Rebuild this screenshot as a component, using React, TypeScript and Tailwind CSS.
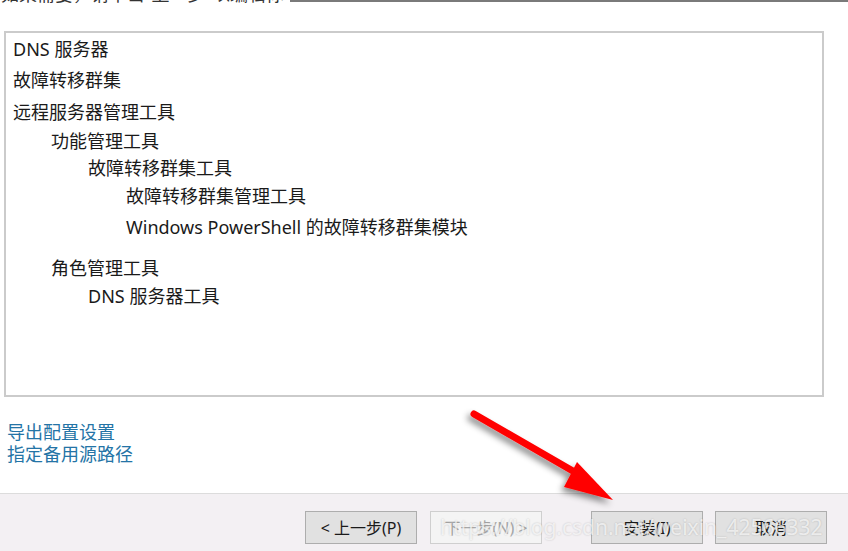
const font = { fontFamily: '"Noto Sans", "Noto Sans CJK SC", sans-serif' }

const rows = [
  { text: "DNS 服务器", indent: "pl-[7px]", top: "mt-[4px]" },
  { text: "故障转移群集", indent: "pl-[7px]", top: "mt-[7px]" },
  { text: "远程服务器管理工具", indent: "pl-[7px]", top: "mt-[8px]" },
  { text: "功能管理工具", indent: "pl-[45px]", top: "mt-[5px]" },
  { text: "故障转移群集工具", indent: "pl-[82px]", top: "mt-[3px]" },
  { text: "故障转移群集管理工具", indent: "pl-[120px]", top: "mt-[4px]" },
  { text: "Windows PowerShell 的故障转移群集模块", indent: "pl-[120px]", top: "mt-[7px]" },
  { text: "角色管理工具", indent: "pl-[45px]", top: "mt-[17px]" },
  { text: "DNS 服务器工具", indent: "pl-[82px]", top: "mt-[4px]" },
]

function Btn({ label, disabled }: { label: string; disabled?: boolean }) {
  return (
    <div
      className={
        disabled
          ? "flex h-[33px] w-[112px] items-center justify-center border border-[#cfcfcf] bg-[#f4f4f4] text-[16px] text-[#a8a8a8]"
          : "flex h-[33px] w-[112px] items-center justify-center border border-[#adadad] bg-[#e1e1e1] text-[16px] text-[#1a1a1a]"
      }
    >
      {label}
    </div>
  )
}

export default function App() {
  return (
    <div
      className="relative flex h-[551px] w-[848px] flex-col overflow-hidden bg-white"
      style={font}
    >
      {/* cut-off heading at the very top */}
      <div className="flex h-[31px] items-start">
        <div className="h-[6px] w-[290px] overflow-hidden">
          <div className="-mt-[17px] pl-[1px] text-[18px] leading-[22px] text-[#333]">
            如果需要，请单击“上一步”以编辑你的选择。
          </div>
        </div>
        <div className="h-[2px] flex-1 bg-[#7a7a7a]" />
      </div>

      {/* selection list */}
      <div className="ml-[4px] h-[366px] w-[820px] border-2 border-[#cbcbcb] bg-white">
        <div className="flex flex-col">
          {rows.map((row, i) => (
            <div
              key={i}
              className={`${row.indent} ${row.top} text-[18px] leading-[24px] text-[#1a1a1a]`}
            >
              {row.text}
            </div>
          ))}
        </div>
      </div>

      {/* links */}
      <div className="mt-[24px] flex flex-col pl-[7px] text-[18px] leading-[22px] text-[#2474a6]">
        <span>导出配置设置</span>
        <span>指定备用源路径</span>
      </div>

      {/* footer */}
      <div className="mt-auto flex h-[58px] items-start justify-end border-t border-[#dcdcdc] bg-[#f3f0f3] pr-[21px] pt-[17px]">
        <div className="flex gap-[13px]">
          <Btn label="< 上一步(P)" />
          <Btn label="下一步(N) >" disabled />
        </div>
        <div className="ml-[49px] flex gap-[12px]">
          <Btn label="安装(I)" />
          <Btn label="取消" />
        </div>
      </div>

      {/* watermark */}
      <div className="pointer-events-none absolute left-[440px] top-[512px] text-[21px] leading-[30px] text-white/70 [text-shadow:0_0_2px_rgba(0,0,0,0.2)]">
        https://blog.csdn.net/weixin_42566332
      </div>

      {/* red arrow annotation */}
      <svg
        className="pointer-events-none absolute left-0 top-0"
        width="848"
        height="551"
        viewBox="0 0 848 551"
      >
        <defs>
          <filter id="sh" x="-20%" y="-20%" width="140%" height="140%">
            <feDropShadow dx="-3" dy="4" stdDeviation="3" floodColor="#000" floodOpacity="0.45" />
          </filter>
        </defs>
        <g filter="url(#sh)">
          <line x1="474" y1="414" x2="585" y2="478" stroke="#ff0000" strokeWidth="7" strokeLinecap="round" />
          <polygon points="577,462 613,500 564,487" fill="#ff0000" />
        </g>
      </svg>
    </div>
  )
}
